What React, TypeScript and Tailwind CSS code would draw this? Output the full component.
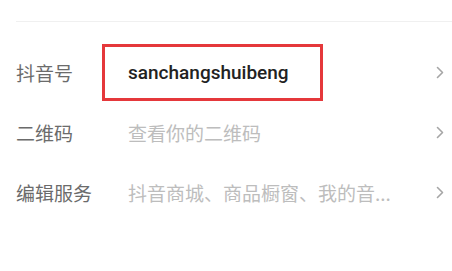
const cjk = '"Noto Sans CJK SC", "Noto Sans", sans-serif';

function Chevron() {
  return (
    <svg width="8" height="13" viewBox="0 0 8 13" fill="none" className="shrink-0">
      <path d="M1.5 1.5 L6.5 6.5 L1.5 11.5" stroke="#a6a6a6" strokeWidth="1.6" strokeLinecap="round" strokeLinejoin="round" />
    </svg>
  );
}

type RowProps = {
  label: string;
  children: React.ReactNode;
};

function Row({ label, children }: RowProps) {
  return (
    <div className="flex h-[60px] items-center pl-4 pr-[8px]">
      <span className="w-[86px] shrink-0 text-[19px] leading-none text-[#6b6b6b]" style={{ fontFamily: cjk }}>
        {label}
      </span>
      <div className="flex min-w-0 flex-1 items-center">{children}</div>
      <Chevron />
    </div>
  );
}

export default function App() {
  return (
    <div className="h-[271px] w-[452px] overflow-hidden bg-white">
      <div className="h-[21px]" />
      <div className="ml-4 h-px bg-[#f0f0f0]" />
      <div className="h-[20px]" />

      <Row label="抖音号">
        <div className="flex h-[57px] w-[221px] items-center border-[3px] border-[#e5383b] pl-[23px]">
          <span
            className="text-[19px] font-medium leading-none text-[#222222]"
            style={{ fontFamily: 'Roboto, "Liberation Sans", sans-serif' }}
          >
            sanchangshuibeng
          </span>
        </div>
      </Row>

      <Row label="二维码">
        <span className="pl-[26px] text-[19px] leading-none text-[#bdbdbd]" style={{ fontFamily: cjk }}>
          查看你的二维码
        </span>
      </Row>

      <Row label="编辑服务">
        <span className="pl-[26px] text-[19px] leading-none whitespace-nowrap text-[#bdbdbd]" style={{ fontFamily: cjk }}>
          抖音商城、商品橱窗、我的音...
        </span>
      </Row>
    </div>
  );
}
